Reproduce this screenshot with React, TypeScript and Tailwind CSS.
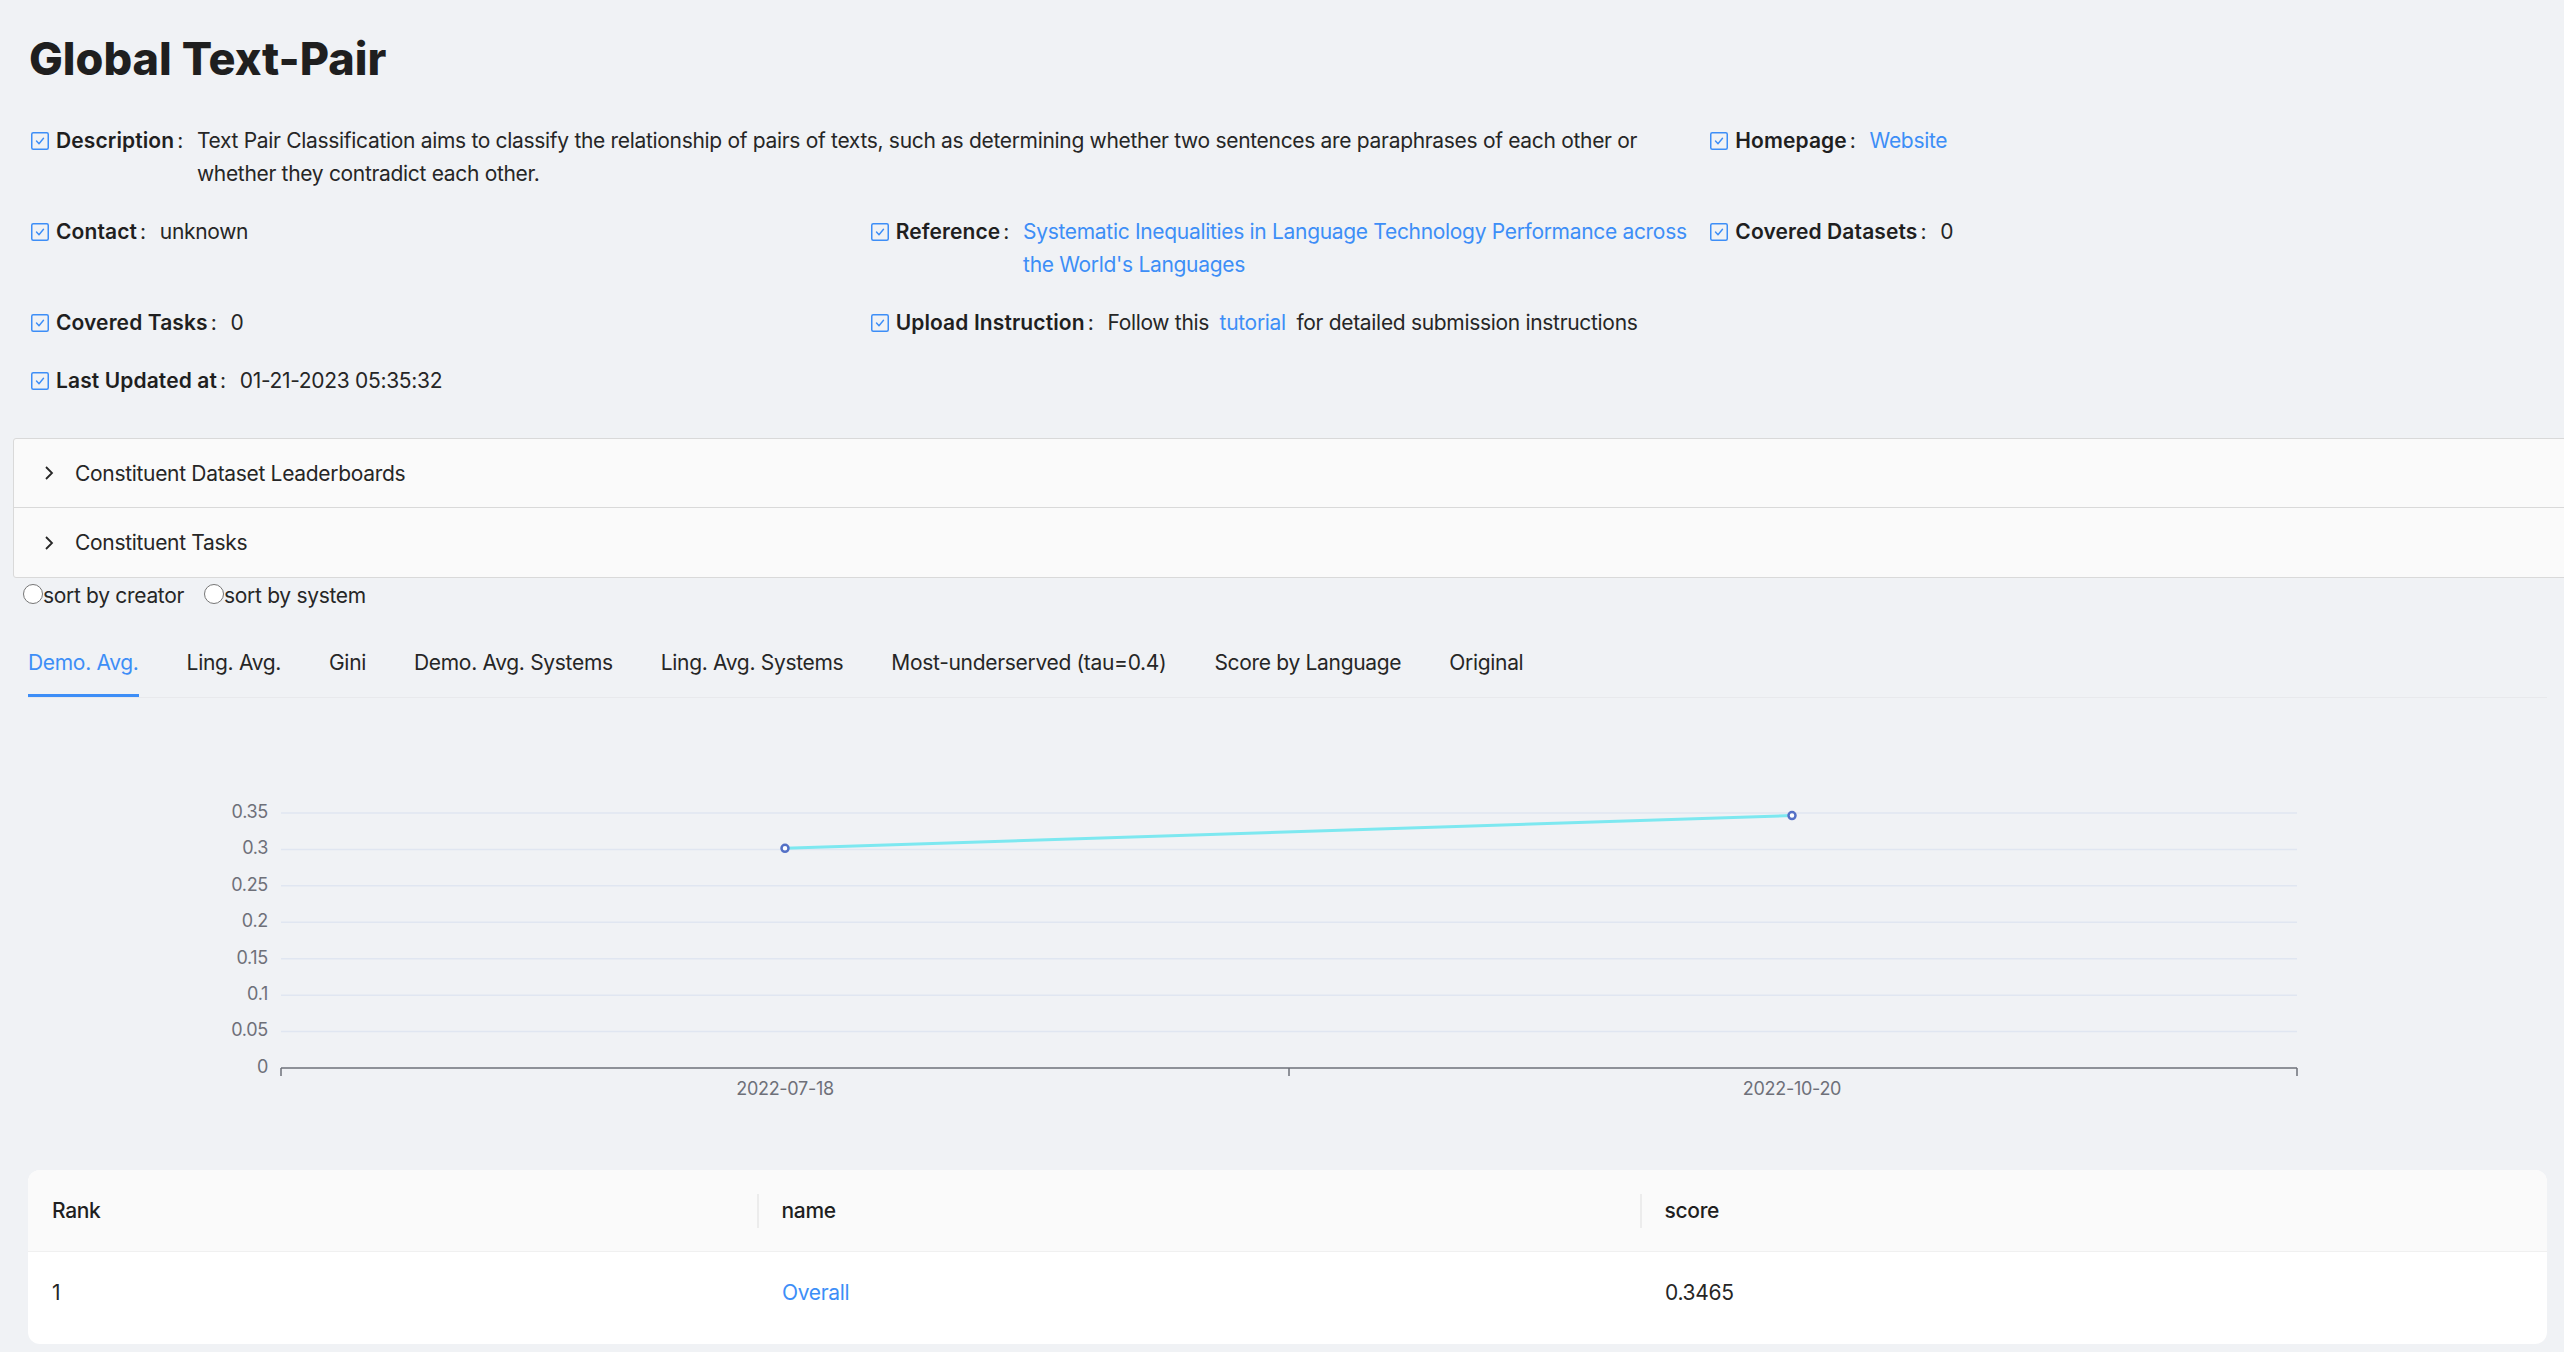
import { useState } from "react";

const blue = "text-[#3d8ef7]";

function CheckIcon() {
  return (
    <svg width="18" height="18" viewBox="0 0 18 18" className="shrink-0 mr-[7px]">
      <rect x="0.75" y="0.75" width="16.5" height="16.5" rx="1.5" fill="none" stroke="#3d8ef7" strokeWidth="1.5" />
      <path d="M5.5 9 L8 11.8 L12.5 6.2" fill="none" stroke="#3d8ef7" strokeWidth="1.4" strokeLinecap="round" strokeLinejoin="round" />
    </svg>
  );
}

function Item({
  label,
  children,
  className = "",
}: {
  label: string;
  children: React.ReactNode;
  className?: string;
}) {
  return (
    <div className={`flex items-start pl-[3px] ${className}`}>
      <div className="flex items-center shrink-0 h-[33px]">
        <CheckIcon />
        <span className="font-semibold text-[#1f1f1f] tracking-[0.005em]">{label}</span>
        <span className="ml-[3px] mr-[14px]">:</span>
      </div>
      <div className="flex-1 min-w-0">{children}</div>
    </div>
  );
}

const tabs = [
  "Demo. Avg.",
  "Ling. Avg.",
  "Gini",
  "Demo. Avg. Systems",
  "Ling. Avg. Systems",
  "Most-underserved (tau=0.4)",
  "Score by Language",
  "Original",
];

function Chevron() {
  return (
    <svg width="12" height="16" viewBox="0 0 12 16" className="shrink-0">
      <path d="M3 2 L9 8 L3 14" fill="none" stroke="#262626" strokeWidth="1.8" />
    </svg>
  );
}

function Chart() {
  const top = 90;
  const bottom = 345;
  const left = 253;
  const right = 2269;
  const max = 0.35;
  const yOf = (v: number) => bottom - (v / max) * (bottom - top);
  const ticks = ["0", "0.05", "0.1", "0.15", "0.2", "0.25", "0.3", "0.35"];
  const pts = [
    { x: 757, v: 0.3015, label: "2022-07-18" },
    { x: 1764, v: 0.3465, label: "2022-10-20" },
  ];
  return (
    <svg width="2519" height="426" className="block ml-[28px] mt-[25px]">
      {ticks.map((t, i) => {
        const y = yOf(i * 0.05);
        return (
          <g key={t}>
            {i > 0 && (
              <line x1={left} x2={right} y1={y} y2={y} stroke="#E0E6F1" strokeWidth="1.5" />
            )}
            <text
              x="240"
              y={y}
              textAnchor="end"
              dominantBaseline="middle"
              fontSize="18"
              fill="#6E7079"
              fontFamily="Inter, sans-serif"
              letterSpacing="-0.3"
            >
              {t}
            </text>
          </g>
        );
      })}
      <line x1={left} x2={right} y1={bottom} y2={bottom} stroke="#6E7079" strokeWidth="1.5" />
      {[left, 1261, right].map((x) => (
        <line key={x} x1={x} x2={x} y1={bottom} y2={bottom + 8} stroke="#6E7079" strokeWidth="1.5" />
      ))}
      {pts.map((p) => (
        <text
          key={p.label}
          x={p.x}
          y="367"
          textAnchor="middle"
          dominantBaseline="middle"
          fontSize="18"
          fill="#6E7079"
          fontFamily="Inter, sans-serif"
          letterSpacing="-0.3"
        >
          {p.label}
        </text>
      ))}
      <polyline
        points={pts.map((p) => `${p.x},${yOf(p.v)}`).join(" ")}
        fill="none"
        stroke="#7de8f0"
        strokeWidth="3"
      />
      {pts.map((p) => (
        <circle key={p.x} cx={p.x} cy={yOf(p.v)} r="3.5" fill="#ffffff" stroke="#5470c6" strokeWidth="2.5" />
      ))}
    </svg>
  );
}

export default function App() {
  const [tab, setTab] = useState(0);
  const [sort, setSort] = useState("");

  return (
    <div className="min-h-screen w-full overflow-hidden bg-[#f0f2f5] text-[#262626] font-['Inter',sans-serif] text-[21px] leading-[33px] tracking-[-0.015em] pt-[28px]">
      <h2 className="ml-[29px] text-[45px] leading-[61px] font-extrabold tracking-normal text-[#1f1f1f]">
        Global Text-Pair
      </h2>

      {/* Descriptions */}
      <div className="ml-[28px] w-[2519px] mt-[35px] grid grid-cols-3 gap-y-[25px]">
        <Item label="Description" className="col-span-2">
          Text Pair Classification aims to classify the relationship of pairs of texts, such as
          determining whether two sentences are paraphrases of each other or whether they
          contradict each other.
        </Item>
        <Item label="Homepage">
          <a className={blue}>Website</a>
        </Item>
        <Item label="Contact">unknown</Item>
        <Item label="Reference">
          <a className={blue}>
            Systematic Inequalities in Language Technology Performance across the World's Languages
          </a>
        </Item>
        <Item label="Covered Datasets">0</Item>
        <Item label="Covered Tasks">0</Item>
        <Item label="Upload Instruction">
          Follow this <a className={`${blue} mx-[5px]`}>tutorial</a> for detailed submission
          instructions
        </Item>
        <div />
        <Item label="Last Updated at">01-21-2023 05:35:32</Item>
      </div>

      {/* Collapse */}
      <div className="ml-[13px] w-[2580px] mt-[41px] border border-[#d9d9d9] rounded-[3px] bg-[#fafafa]">
        <div className="h-[69px] flex items-center pl-[29px] gap-[20px] border-b border-[#d9d9d9]">
          <Chevron />
          <span>Constituent Dataset Leaderboards</span>
        </div>
        <div className="h-[69px] flex items-center pl-[29px] gap-[20px]">
          <Chevron />
          <span>Constituent Tasks</span>
        </div>
      </div>

      {/* Sort radios */}
      <div className="flex items-center h-[33px] pl-[23px] mt-[1px]">
        {["sort by creator", "sort by system"].map((s) => (
          <label key={s} className="flex items-center mr-[20px] cursor-pointer" onClick={() => setSort(s)}>
            <span
              className={`w-[20px] h-[20px] rounded-full border-[1.5px] border-[#767676] bg-white mb-[4px] ${
                sort === s ? "border-[6px] border-[#3d8ef7]" : ""
              }`}
            />
            <span>{s}</span>
          </label>
        ))}
      </div>

      {/* Tabs */}
      <div className="ml-[28px] w-[2519px] mt-[16px] flex gap-[48px] border-b-[1.5px] border-[#e8e9ec]">
        {tabs.map((t, i) => (
          <button
            key={t}
            onClick={() => setTab(i)}
            className={`pt-[18px] pb-[15px] border-b-[3px] whitespace-nowrap ${
              tab === i ? "border-[#3d8ef7] text-[#3d8ef7]" : "border-transparent"
            }`}
          >
            {t}
          </button>
        ))}
      </div>

      <Chart />

      {/* Table */}
      <div className="ml-[28px] w-[2519px] mt-[21px] rounded-[12px] overflow-hidden bg-white">
        <div className="grid grid-cols-[729px_883px_907px] bg-[#fafafa] border-b-[1.5px] border-[#f0f0f0] h-[82px] font-medium text-[#1f1f1f]">
          <div className="flex items-center pl-[24px]">Rank</div>
          <div className="flex items-center">
            <span className="w-[1.5px] h-[34px] bg-[#ececec]" />
            <span className="pl-[23px]">name</span>
          </div>
          <div className="flex items-center">
            <span className="w-[1.5px] h-[34px] bg-[#ececec]" />
            <span className="pl-[23px]">score</span>
          </div>
        </div>
        <div className="grid grid-cols-[729px_883px_907px] h-[92px] pt-[24px]">
          <div className="pl-[24px]">1</div>
          <div className="pl-[25px]">
            <a className={blue}>Overall</a>
          </div>
          <div className="pl-[25px]">0.3465</div>
        </div>
      </div>
    </div>
  );
}
